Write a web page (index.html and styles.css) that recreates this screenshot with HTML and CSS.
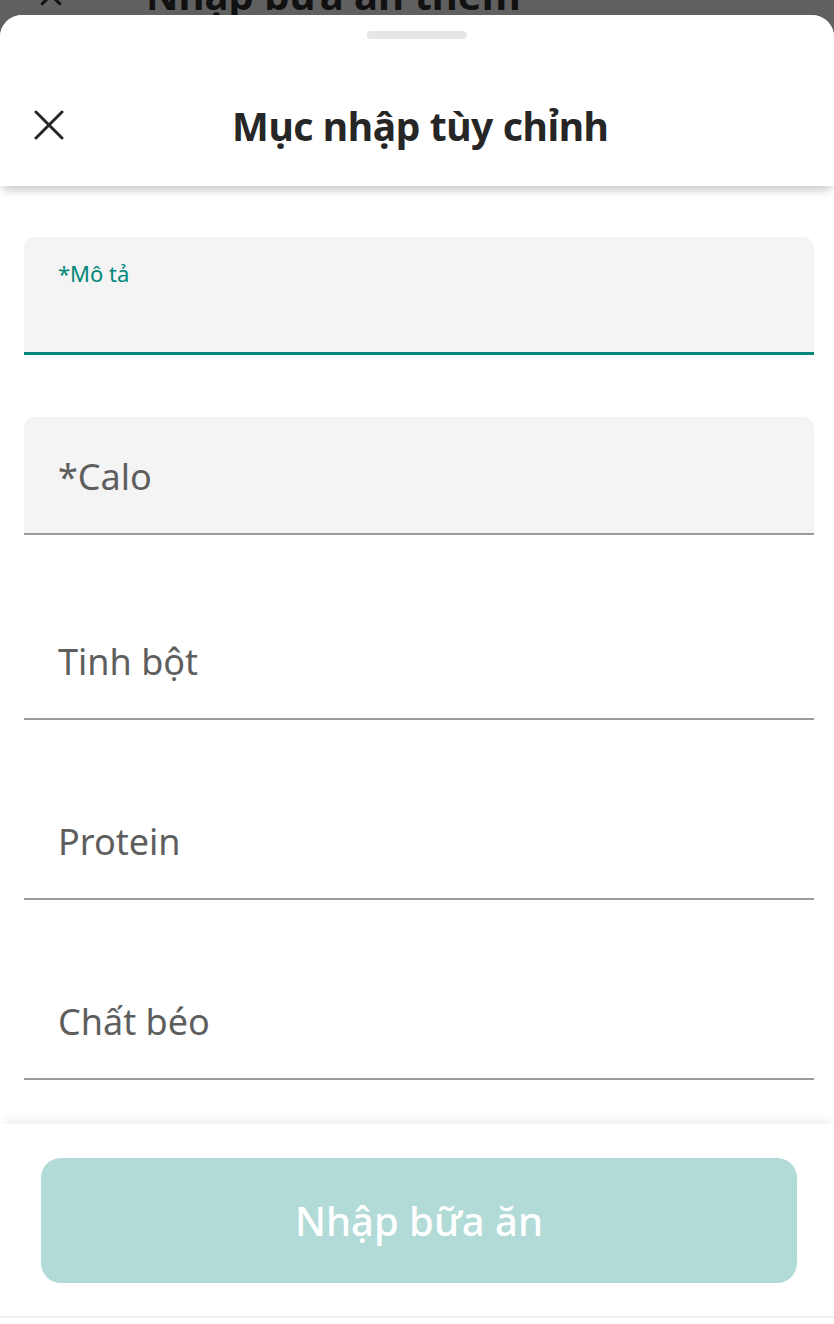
FILE: index.html
```html
<!DOCTYPE html>
<html lang="vi">
<head>
<meta charset="utf-8">
<title>Mục nhập tùy chỉnh</title>
<link rel="stylesheet" href="styles.css">
</head>
<body>
<div class="backdrop">
  <div class="backdrop-row">
    <svg class="backdrop-x" viewBox="0 0 24 24" width="30" height="30"><path d="M5 5L19 19M19 5L5 19" stroke="#111" stroke-width="2.4" stroke-linecap="round" fill="none"/></svg>
    <span class="backdrop-title">Nhập bữa ăn thêm</span>
  </div>
</div>
<div class="sheet">
  <header class="sheet-header">
    <div class="handle"></div>
    <div class="header-row">
      <button class="close-btn" aria-label="Đóng">
        <svg viewBox="0 0 30 30" width="30" height="30"><path d="M2 2L28 28M28 2L2 28" stroke="#262626" stroke-width="3" stroke-linecap="round" fill="none"/></svg>
      </button>
      <h1 class="title">Mục nhập tùy chỉnh</h1>
    </div>
  </header>
  <main class="form">
    <div class="field field-filled field-active">
      <span class="label-small">*Mô tả</span>
    </div>
    <div class="field field-filled field-tall">
      <span class="label">*Calo</span>
    </div>
    <div class="field">
      <span class="label">Tinh bột</span>
    </div>
    <div class="field">
      <span class="label">Protein</span>
    </div>
    <div class="field">
      <span class="label">Chất béo</span>
    </div>
  </main>
  <footer class="footer">
    <button class="submit">Nhập bữa ăn</button>
    <div class="bottom-line"></div>
  </footer>
</div>
</body>
</html>
```

FILE: styles.css
```css
* { box-sizing: border-box; }
html, body { margin: 0; padding: 0; }
body {
  background: #606060;
  font-family: "Noto Sans", "Open Sans", sans-serif;
  width: 834px;
  height: 1324px;
  overflow: hidden;
}
.backdrop {
  height: 15px;
  overflow: hidden;
}
.backdrop-row {
  display: flex;
  align-items: center;
  margin-top: -30px;
  height: 50px;
  padding-left: 36px;
  gap: 80px;
}
.backdrop-x { display: block; }
.backdrop-title {
  font-size: 40px;
  font-weight: 700;
  color: #111;
  line-height: 50px;
}
.sheet {
  background: #fff;
  border-radius: 22px 22px 0 0;
  height: 1309px;
  display: flex;
  flex-direction: column;
  overflow: hidden;
}
.sheet-header {
  height: 171px;
  position: relative;
  z-index: 2;
  background: #fff;
  box-shadow: 0 7px 9px -3px rgba(0,0,0,0.22);
  display: flex;
  flex-direction: column;
  align-items: center;
}
.handle {
  margin-top: 16px;
  width: 100px;
  height: 8px;
  border-radius: 4px;
  background: #e6e6e6;
}
.header-row {
  width: 100%;
  flex: 1;
  display: flex;
  align-items: center;
  padding-left: 34px;
  padding-top: 25px;
}
.close-btn {
  border: 0;
  background: none;
  padding: 0;
  width: 30px;
  height: 30px;
  display: flex;
}
.title {
  margin: 0 0 0 168px;
  font-size: 39px;
  font-weight: 700;
  color: #262626;
  letter-spacing: -0.4px;
}
.form {
  flex: 1;
  padding: 51px 20px 0 24px;
  display: flex;
  flex-direction: column;
  gap: 62px;
}
.field {
  height: 118px;
  border-bottom: 2px solid #9a9a9a;
  padding-left: 34px;
  display: flex;
  align-items: center;
  padding-top: 2px;
}
.field-filled {
  background: #f4f4f4;
  border-radius: 10px 10px 0 0;
}
.field-active {
  border-bottom: 3px solid #00877a;
  align-items: flex-start;
  padding-top: 21px;
}
.field-tall { margin-bottom: 5px; }
.label {
  font-size: 36px;
  color: #5e5e5e;
}
.label-small {
  font-size: 22px;
  color: #00877a;
}
.footer {
  height: 200px;
  position: relative;
  z-index: 2;
  background: #fff;
  box-shadow: 0 -8px 10px -4px rgba(0,0,0,0.07);
  padding-top: 34px;
  display: flex;
  flex-direction: column;
}
.submit {
  margin: 0 37px 0 41px;
  height: 125px;
  border: 0;
  border-radius: 20px;
  background: #b2dbd7;
  color: #fff;
  font-family: "Noto Sans", "Open Sans", sans-serif;
  font-size: 40px;
  font-weight: 500;
}
.bottom-line {
  margin-top: 33px;
  height: 2px;
  background: #f0f0f0;
}
```
